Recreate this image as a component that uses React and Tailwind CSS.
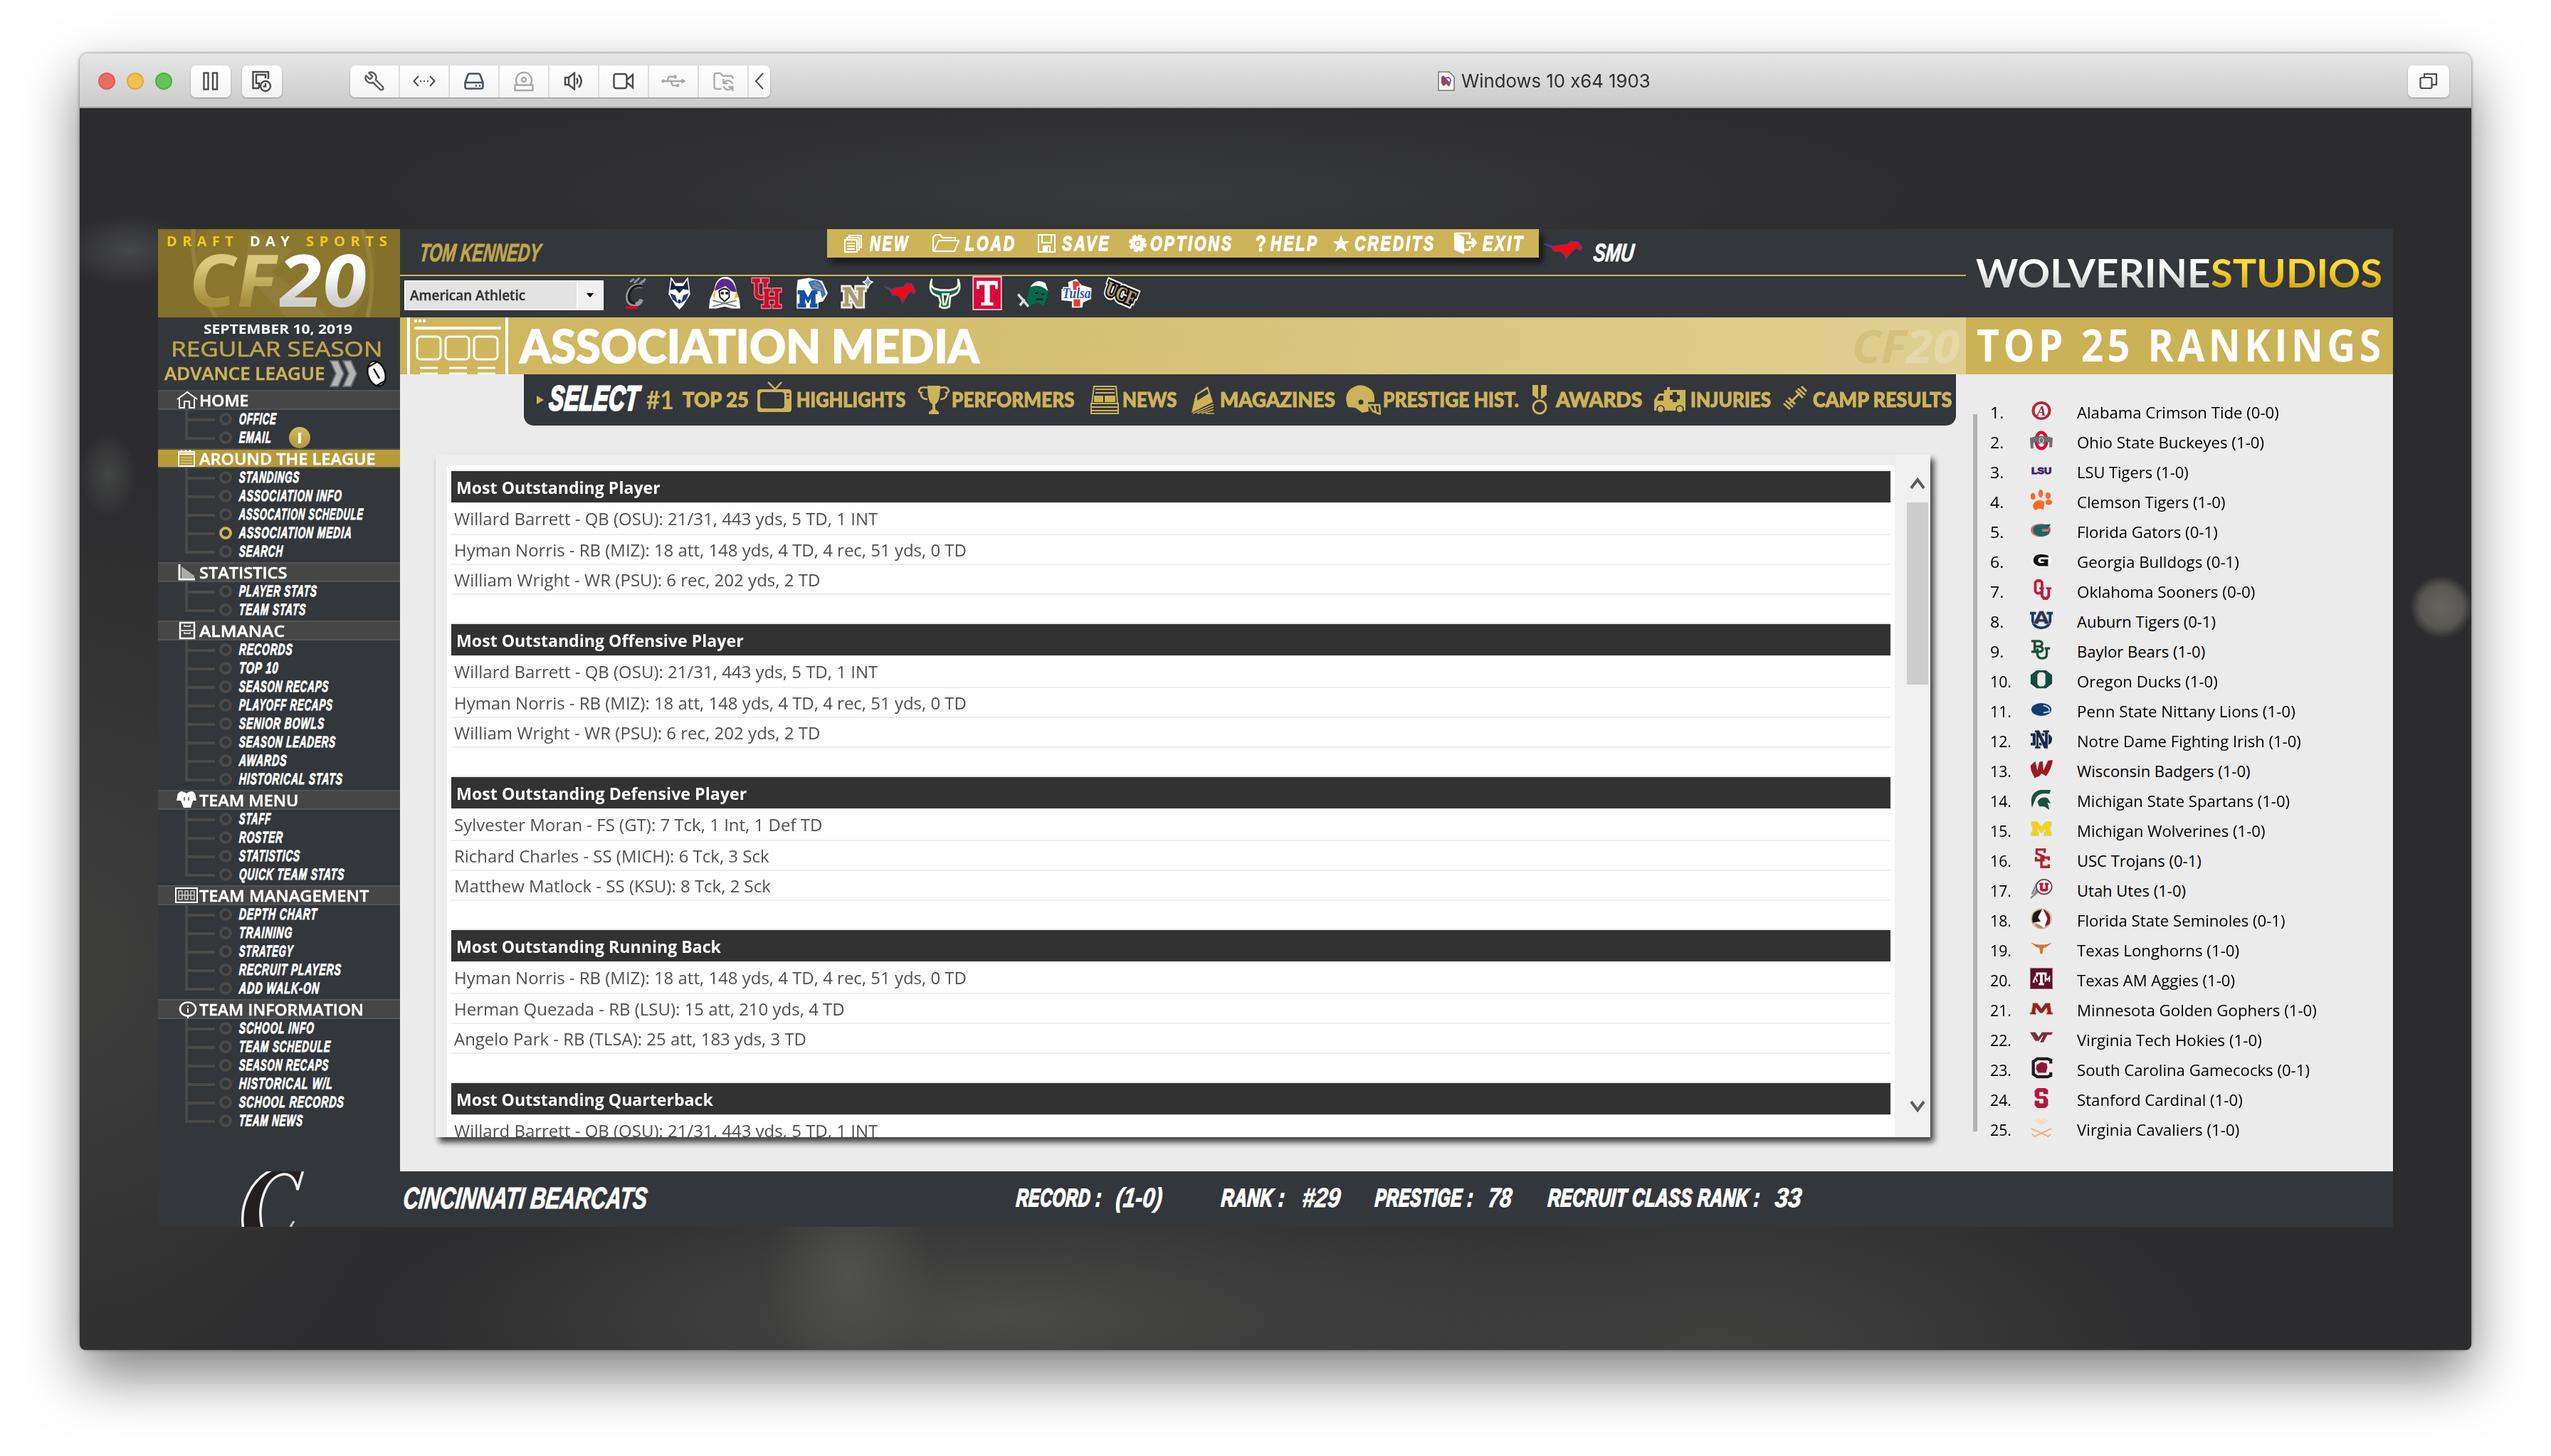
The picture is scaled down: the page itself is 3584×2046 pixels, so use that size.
import React, { useLayoutEffect, useRef, useState } from "react";
import { Wrench, Usb, FolderSync } from "lucide-react";

/* Text squeezed or stretched horizontally to a given width. */
function Fit({ w, className = "", inner = "", skew = 0, children }) {
  const ref = useRef(null);
  const [s, setS] = useState(1);
  useLayoutEffect(() => {
    if (ref.current) setS(w / ref.current.offsetWidth);
  }, [w]);
  return (
    <span className={"block shrink-0 leading-none " + className} style={{ width: w }}>
      <span
        ref={ref}
        className={"block w-max origin-left whitespace-nowrap " + inner}
        style={{ transform: `skewX(${skew}deg) scaleX(${s})` }}
      >
        {children}
      </span>
    </span>
  );
}

const GOTHIC = "font-['Liberation_Sans',sans-serif] font-bold italic ";
const OPEN = "font-['Open_Sans','Noto_Sans',sans-serif] ";
const LATO = "font-['Lato',sans-serif] font-black ";

/* ---------- title bar ---------- */
function ToolCell({ children, last }) {
  return (
    <div className={"flex h-full items-center justify-center " + (last ? "w-[30px]" : "w-[70px] border-r-2 border-[#dcdcdc]")}>
      {children}
    </div>
  );
}

function TitleBar() {
  const st = { fill: "none", stroke: "#4a4a4a", strokeWidth: 2.4 };
  return (
    <div className="flex h-[77px] items-center rounded-t-[12px] border-b-2 border-[#a3a3a1] bg-linear-to-b from-[#e6e6e6] to-[#cbcbcb] pl-[26px] pt-[3px]">
      <div className="flex gap-4">
        <div className="size-6 rounded-full border-2 border-[#dc5d54] bg-[#ee6b60]" />
        <div className="size-6 rounded-full border-2 border-[#e0a73e] bg-[#f5be4f]" />
        <div className="size-6 rounded-full border-2 border-[#52ad44] bg-[#61c654]" />
      </div>
      <div className="ml-[26px] flex h-[45px] w-[56px] items-center justify-center rounded-[7px] bg-linear-to-b from-white to-[#f3f3f3] shadow-[0_1px_2px_#888]">
        <svg width="22" height="26" {...st}><rect x="1.5" y="1.5" width="6" height="23" /><rect x="14" y="1.5" width="6" height="23" /></svg>
      </div>
      <div className="ml-4 flex h-[45px] w-[56px] items-center justify-center rounded-[7px] bg-linear-to-b from-white to-[#f3f3f3] shadow-[0_1px_2px_#888]">
        <svg width="28" height="32" {...st}><path d="M10 26H1.5V3H23V13M10 26V19H6V7H19V12" /><circle cx="19" cy="23" r="7" /><path d="M19 19V23.5H15.5" /></svg>
      </div>
      <div className="ml-[96px] flex h-[45px] w-[590px] rounded-[7px] bg-linear-to-b from-white to-[#f3f3f3] shadow-[0_1px_2px_#888]">
        <ToolCell><Wrench size={30} color="#5a5a5a" strokeWidth={1.9} className="-scale-x-100" /></ToolCell>
        <ToolCell><svg width="32" height="18" {...st} strokeWidth="2"><path d="M8 2L1.5 9L8 16M24 2L30.5 9L24 16M10 9h2M15 9h2M20 9h2" /></svg></ToolCell>
        <ToolCell><svg width="28" height="24" fill="none" stroke="#45506e" strokeWidth="2.6"><path d="M1.5 14L5.500 3Q6 1.500 8 1.500H20Q22 1.500 22.500 3L26.500 14V20Q26.500 22.500 24 22.500H4Q1.500 22.500 1.500 20ZM1.500 14H26.500M16 18.500h2M21 18.500h2" /></svg></ToolCell>
        <ToolCell><svg width="28" height="30" fill="none" stroke="#a9a9a9" strokeWidth="2.4"><path d="M5 20A11 11 0 1 1 23 20M1.500 20.500H26.500V28H1.500Z" /><circle cx="14" cy="13" r="3" /></svg></ToolCell>
        <ToolCell><svg width="28" height="26" {...st}><path d="M2 8H7L15 1.500V24.500L7 18H2ZM7 8V18M18 9Q21 13 18 17M21 4Q28.500 13 21 22" /></svg></ToolCell>
        <ToolCell><svg width="30" height="24" {...st}><rect x="1.500" y="2" width="18" height="20" rx="3" /><path d="M20 10L28 3V21L20 14" /></svg></ToolCell>
        <ToolCell><Usb size={30} color="#a9a9a9" strokeWidth={1.9} className="rotate-45" /></ToolCell>
        <ToolCell><FolderSync size={31} color="#a9a9a9" strokeWidth={1.8} /></ToolCell>
        <ToolCell last><svg width="14" height="26" {...st} strokeWidth="2"><path d="M12 2L2 13L12 24" /></svg></ToolCell>
      </div>
      <svg className="ml-[938px]" width="24" height="28"><path d="M1 1H16L23 8V27H1Z" fill="#fff" stroke="#777" strokeWidth="1.5" /><path d="M5 8L8 6L18 17L16 22L12 18L8 21L5 17Z" fill="#b03a4c" /><circle cx="14" cy="13" r="4" fill="none" stroke="#4868a8" strokeWidth="2" /></svg>
      <Fit w={266} className="ml-[9px] font-['Inter',sans-serif] text-[26px] text-[#2e2e2e] [font-feature-settings:'calt'_0]">Windows 10 x64 1903</Fit>
      <div className="ml-[1064px] flex h-[45px] w-[58px] items-center justify-center rounded-[7px] bg-linear-to-b from-white to-[#f3f3f3] shadow-[0_1px_2px_#888]">
        <svg width="26" height="24" {...st} strokeWidth="2.2"><rect x="1.500" y="7" width="16" height="15" rx="2" /><path d="M7 7V2H24V17H18" /></svg>
      </div>
    </div>
  );
}

/* ---------- sidebar ---------- */
const sections = [
  { t: "HOME", w: 69, icon: "home", rows: [["OFFICE", 53], ["EMAIL", 46]] },
  { t: "AROUND THE LEAGUE", w: 248, icon: "cal", on: true, rows: [["STANDINGS", 85], ["ASSOCIATION INFO", 145], ["ASSOCATION SCHEDULE", 175], ["ASSOCIATION MEDIA", 159, true], ["SEARCH", 62]] },
  { t: "STATISTICS", w: 124, icon: "stat", rows: [["PLAYER STATS", 110], ["TEAM STATS", 94]] },
  { t: "ALMANAC", w: 120, icon: "alm", rows: [["RECORDS", 76], ["TOP 10", 56], ["SEASON RECAPS", 126], ["PLAYOFF RECAPS", 132], ["SENIOR BOWLS", 120], ["SEASON LEADERS", 136], ["AWARDS", 68], ["HISTORICAL STATS", 146]] },
  { t: "TEAM MENU", w: 139, icon: "team", rows: [["STAFF", 45], ["ROSTER", 62], ["STATISTICS", 86], ["QUICK TEAM STATS", 148]] },
  { t: "TEAM MANAGEMENT", w: 238, icon: "mgmt", rows: [["DEPTH CHART", 110], ["TRAINING", 75], ["STRATEGY", 76], ["RECRUIT PLAYERS", 144], ["ADD WALK-ON", 113]] },
  { t: "TEAM INFORMATION", w: 231, icon: "info", rows: [["SCHOOL INFO", 106], ["TEAM SCHEDULE", 129], ["SEASON RECAPS", 126], ["HISTORICAL W/L", 132], ["SCHOOL RECORDS", 148], ["TEAM NEWS", 90]] },
];

function SideIcon({ k }) {
  const p = { width: 32, height: 26, viewBox: "0 0 32 26", fill: "none", stroke: "#fff", strokeWidth: 2 };
  if (k === "home") return <svg {...p}><path d="M3 12L17 2L31 12M6 11V24H13V15H20V24H27V11" /></svg>;
  if (k === "cal") return <svg {...p}><path d="M5 4H27V24H5ZM5 7H27M9 1V5M15 1V5M21 1V5" /><path d="M8 12H24M8 16H24M8 20H24" strokeOpacity=".3" /></svg>;
  if (k === "stat") return <svg {...p}><path d="M6 2V23H28" strokeWidth="3" /><path d="M9 22V5L27 18V22Z" fill="#aaa" stroke="none" /></svg>;
  if (k === "alm") return <svg {...p}><path d="M7 2H27V24H7Z" strokeWidth="2.5" /><path d="M7 13H27M13 5V7H21V5M13 15V17H21V15" stroke="#ccc" /></svg>;
  if (k === "team") return <svg {...p}><path d="M3 9Q3 2 9 1Q14 2 16 4Q19 1 24 1Q29 3 29 9L30 14H25L22 24H12L8 14H2Z" fill="#fff" stroke="none" /><path d="M13 9V14M19 9V14" stroke="#777" /></svg>;
  if (k === "mgmt") return <svg {...p}><path d="M1 3H31V23H1Z" /><path d="M5 7H10V19H5ZM14 7H18V19H14ZM22 7H27V19H22ZM5 13H27" stroke="#ccc" strokeWidth="1.5" /></svg>;
  return <svg {...p}><ellipse cx="18" cy="13" rx="11" ry="9.500" strokeWidth="2.5" /><path d="M18 22V26M18 8V10M18 12V18" /></svg>;
}

function Sidebar() {
  return (
    <div className="flex w-[340px] shrink-0 flex-col bg-[#33363b]">
      <div className="relative h-[124px] overflow-hidden bg-[#84702a]">
        <svg className="absolute inset-0" width="340" height="124"><path d="M70 0Q30 60 80 124H270Q330 60 290 0Z" fill="#8d7930" fillOpacity=".6" /><path d="M50 0Q44 70 82 124M286 0Q310 60 294 124" stroke="#95813a" strokeWidth="6" fill="none" /><path d="M130 0L190 30L160 60L200 90L240 124H180L120 60Z" fill="#968345" fillOpacity=".5" /></svg>
        <div className="relative pl-[12px] pt-[8px]">
          <div className="flex justify-between pr-[10px]">
            <Fit w={101} className="font-['Open_Sans',sans-serif] text-[19px] font-bold tracking-[7px] text-[#f3c81c]">DRAFT</Fit>
            <Fit w={63} className="font-['Open_Sans',sans-serif] text-[19px] font-bold tracking-[7px] text-white">DAY</Fit>
            <Fit w={122} className="font-['Open_Sans',sans-serif] text-[19px] font-bold tracking-[7px] text-[#f3c81c]">SPORTS</Fit>
          </div>
          <div className="mt-[-8px] flex pl-[31px]">
            <Fit w={130} skew={3} className="h-[102px] font-['Open_Sans',sans-serif] text-[102px] font-bold italic" inner="pr-[6px] bg-linear-to-b from-[#dcc87c] from-30% to-[#a8903e] to-80% bg-clip-text text-transparent">CF</Fit>
            <Fit w={128} skew={3} className="ml-[-4px] h-[102px] font-['Open_Sans',sans-serif] text-[102px] font-bold italic" inner="pr-[4px] bg-linear-to-b from-white from-40% to-[#cfcfcf] to-80% bg-clip-text text-transparent">20</Fit>
          </div>
        </div>
      </div>
      <div className="flex h-[102px] flex-col">
        <Fit w={209} className={OPEN + "ml-[64px] mt-[7px] text-[18px] font-bold text-white"}>SEPTEMBER 10, 2019</Fit>
        <Fit w={297} className={OPEN + "ml-[18px] mt-[4px] text-[30px] font-medium text-[#bfa64a] [-webkit-text-stroke:0.6px_#bfa64a]"}>REGULAR SEASON</Fit>
        <div className="flex h-[40px] items-center pl-[9px]">
          <Fit w={226} className={OPEN + "mt-[-1px] text-[25px] font-semibold text-[#cdb358] [-webkit-text-stroke:0.5px_#cdb358]"}>ADVANCE LEAGUE</Fit>
          <svg className="ml-[6px]" width="40" height="38"><path d="M1 1H12L20 19L12 37H1L9 19ZM19 1H30L38 19L30 37H19L27 19Z" fill="#b5b5b5" stroke="#6e7073" strokeWidth="2" /></svg>
          <svg className="ml-[10px]" width="32" height="40" viewBox="0 0 32 40"><ellipse cx="16" cy="20" rx="12" ry="18" transform="rotate(-18 16 20)" fill="#fff" stroke="#111" strokeWidth="2.5" /><path d="M4 11L16 4M16 37L28 30M12 13L20 27" stroke="#111" strokeWidth="2.5" /></svg>
        </div>
      </div>
      {sections.map((s) => (
        <div key={s.t} className="mb-[2px]">
          <div className={"flex h-[28px] items-center border-y-2 pl-[24px] " + (s.on ? "border-[#4f4d48] bg-[#b79b38]" : "border-[#535353] bg-[#464646]")}>
            <SideIcon k={s.icon} />
            <Fit w={s.w} className={OPEN + "ml-[2px] text-[22px] font-semibold text-white [-webkit-text-stroke:0.5px_white]"}>{s.t}</Fit>
          </div>
          {s.rows.map(([t, w, on], i) => (
            <div key={t} className="flex h-[26px] items-center pl-[38px]">
              <div className="flex h-full w-[4px] flex-col">
                <div className={i === s.rows.length - 1 ? "h-[16px] w-[4px] bg-[#4b4a49]" : "h-full w-[4px] bg-[#4b4a49]"} />
              </div>
              <div className="mt-[2px] h-[4px] w-[38px] bg-[#4b4a49]" />
              <div className={"ml-[6px] size-[18px] rounded-full border-4 " + (on ? "border-[#cdb358]" : "border-[#4b4a49]")} />
              <Fit w={w} skew={-4} className={GOTHIC + "ml-[10px] text-[22px] tracking-[1.5px] text-white [-webkit-text-stroke:1px_white]"}>{t}</Fit>
              {t === "EMAIL" && (
                <div className="ml-[24px] flex h-[30px] w-[30px] items-center justify-center rounded-full bg-linear-to-b from-[#d2ba62] to-[#b0963c]">
                  <div className="h-[15px] w-[4px] bg-white" />
                </div>
              )}
            </div>
          ))}
        </div>
      ))}
      <div className="mt-auto h-[78px] overflow-hidden">
        <svg width="340" height="78"><path d="M160 -2C130 12 114 48 120 82H147C138 50 150 8 176 4Q192 3 196 26L204 -2Z" fill="#231f20" stroke="#f4f4f4" strokeWidth="3.5" /><path d="M186 78L191 70" stroke="#ccc" strokeWidth="3" /></svg>
      </div>
    </div>
  );
}

/* ---------- team marks ---------- */
function Mark({ k, w = 34, h = 32 }) {
  const T = ({ c, x = 17, y = 26, s = 28, st = "#fff", sw = 2, f = "Liberation Serif", tl, i, children }) => (
    <text x={x} y={y} textAnchor="middle" fontFamily={f + ", serif"} fontWeight="bold" fontStyle={i ? "italic" : "normal"} fontSize={s} fill={c} stroke={st} strokeWidth={sw} paintOrder="stroke" textLength={tl} lengthAdjust="spacingAndGlyphs">{children}</text>
  );
  const marks = {
    cin: <><path d="M25 9Q14 7 11 18Q10 27 18 27Q22 27 24 22" fill="none" stroke="#999" strokeWidth="4" /><path d="M25 9Q15 7 12 18Q11.500 26 18 26" fill="none" stroke="#1a1a1a" strokeWidth="2.500" /><path d="M13 5L17 2M17 6L22 1M22 7L28 2M24 4L27 5" stroke="#8f9193" strokeWidth="2" /><path d="M9 30H20" stroke="#e4002b" strokeWidth="3" /></>,
    con: <><path d="M6 0L12 6H22L28 0L31 17L22 28L17 32L12 28L3 17Z" fill="#fff" /><path d="M7 3L12 9H22L27 3L29 13L22 12L17 16L12 12L5 13Z" fill="#14264a" /><path d="M5 16L12 18L15 26L8 22ZM29 16L22 18L19 26L26 22Z" fill="#2b3f73" /><circle cx="17" cy="24" r="2" fill="#14264a" /></>,
    ecu: <><path d="M6 12Q8 0 18 0Q28 0 30 14L33 22L34 31H25L17 29L8 31H0L1 22Z" fill="#fff" /><path d="M6 14Q9 1 18 2Q27 2 30 15L24 14L18 9L11 12Z" fill="#592a8a" /><path d="M4 18L8 12L6 22ZM30 14L27 22L32 20Z" fill="#e8c52f" /><path d="M11 14Q17 9 22 14V20L17 24L12 20Z" fill="#fff" stroke="#222" strokeWidth="1.500" /><path d="M13 16h3M18 16h3" stroke="#111" strokeWidth="2.500" /><path d="M4 29L30 23M4 23L30 29" stroke="#777" strokeWidth="1.200" /></>,
    uh: <g fill="#c8102e" stroke="#e58a98" strokeWidth="1"><path d="M0 1H10V6H8V17Q12 19 13 17V6H11V1H20V6H18V18Q14 24 8 22Q3 21 3 16V6H0Z" /><path d="M13 11H22V15H20V19H26V15H24V11H34V15H31V27H34V31H24V27H26V23H20V27H22V31H11V27H14V15H13Z" /></g>,
    mem: <><path d="M2 3L14 1L28 4L34 16L29 24L24 25V31H1V12Z" fill="#fff" /><path d="M2 13H9L13 20L17 13H23V17H21V26H23V30H15V26H16V21L13 26L10 21V26H11V30H2V26H4V17H2Z" fill="#1450a0" /><path d="M13 5Q24 0 29 9L32 17L28 21L26 14L22 14L17 12Z" fill="#3f74b5" /><path d="M18 9L28 13M20 5Q24 9 26 8" stroke="#8a8d8f" strokeWidth="2" fill="none" /></>,
    nav: <><path d="M2 9H11L18 20V14H16V9H27V14H25V30H17L10 19V25H12V30H2V25H4V14H2Z" fill="#a99b70" stroke="#f1eee4" strokeWidth="2" /><path d="M29 0L31 4L34 5L31 7L29 11L27 7L24 5L27 4Z" fill="#8f9fce" stroke="#fff" /></>,
    smu: <path d="M0 9L8 12Q14 10 20 10L23 6L29 7L33 14L31 17L28 14L24 18L19 26L17 21L14 18L9 18L6 13Z" fill="#f00a12" stroke="#354ca1" strokeWidth="0.800" />,
    usf: <path d="M4 2Q1 10 8 12L13 13H22L27 12Q33 10 31 2Q36 15 26 18L23 19L22 29Q17 32 12 29L13 25L11 19L8 18Q-1 15 4 2ZM15 17L16 27H18L21 17Z" fill="#0b6b4f" stroke="#f5f2dd" strokeWidth="2" />,
    tem: <><path d="M1 0H33V32H1Z" fill="#d9083a" stroke="#f5b9c6" strokeWidth="1.500" /><path d="M5 4H29V12H26V8H20V25H24V28H10V25H14V8H8V12H5Z" fill="#fff" /></>,
    tul: <><path d="M12 16Q12 6 23 6Q34 8 32 20L28 28L22 25L14 28L10 22Z" fill="#056a4a" /><path d="M14 10Q20 1 30 6L33 14Q24 6 14 10Z" fill="#fff" /><path d="M1 17L12 29M3 28L8 22" stroke="#ddd" strokeWidth="2.500" /><path d="M19 16h3M26 17h3M20 22h7" stroke="#012" strokeWidth="1.500" /></>,
    tls: <><path d="M8 5L17 2L22 8L33 11L31 22L24 25L23 30H12V24L1 23V12H9Z" fill="#fff" /><path d="M13 4L20 5L21 29H14Z" fill="#e0402c" /><T c="#1f5aa6" y="21" s="14" i tl="30" sw="2">Tulsa</T></>,
    ucf: <g transform="rotate(22 17 16)"><T c="#b9a273" y="23" s="20" tl="32" st="#fff" sw="7">UCF</T><T c="#b9a273" y="23" s="20" tl="32" st="#111" sw="4">UCF</T></g>,
    ala: <><ellipse cx="17" cy="16" rx="15" ry="14.500" fill="#b3283f" stroke="#fff" /><ellipse cx="17" cy="16" rx="10" ry="10" fill="#fff" /><T c="#a51c36" y="23" s="20" i sw="0">A</T></>,
    osu: <><ellipse cx="17" cy="16" rx="8" ry="12" fill="none" stroke="#d0103a" strokeWidth="5" /><path d="M0 12Q17 6 34 12L33 26H29V19Q23 15 22 22L17 20L12 22Q9 15 5 20V28H1Z" fill="#6b6e70" /><ellipse cx="17" cy="16" rx="3" ry="4" fill="none" stroke="#ccc" strokeWidth="1.200" /></>,
    lsu: <T c="#3c2370" y="21" s="13" tl="30" f="Liberation Sans" st="#3c2370" sw="1">LSU</T>,
    cle: <g fill="#f76c2b"><path d="M6 20Q14 12 22 19L20 30Q14 27 8 31Q2 26 6 20Z" /><ellipse cx="4.500" cy="10" rx="3.500" ry="5" /><ellipse cx="16" cy="6" rx="3.500" ry="6" /><ellipse cx="27" cy="9" rx="4" ry="5" /><ellipse cx="28" cy="19" rx="5" ry="4" /></g>,
    fla: <><ellipse cx="16" cy="16" rx="15" ry="10" fill="#d56a6f" /><path d="M31 7L27 14H18V18H27L30 12L28 22Q14 30 5 19Q3 8 16 8Z" fill="#146a60" /></>,
    uga: <><ellipse cx="17" cy="16" rx="15" ry="11" fill="#fff" /><path d="M27 9Q12 4 6 12Q2 22 14 25H27V15H16V18H21V20Q12 22 12 16Q13 11 22 12H28Z" fill="#111" /></>,
    okl: <g fill="#c21b3c" fillRule="evenodd"><path d="M6 4L10 0H16L20 4V19L16 23H10L6 19ZM10 5V18L12 19L16 18V5L13 4Z" /><path d="M14 12H21V15H20V25L24 27L26 24V15H24V12H32V15H30V26L26 31H20L16 26V15H14Z" /></g>,
    aub: <><path d="M4 6V18Q6 28 17 28Q28 28 30 18V6M0 6H9M25 6H34" stroke="#1b3768" strokeWidth="4" fill="none" /><path d="M14 3H20L29 22H22L21 19H13L12 22H5ZM17 8L14 15H20Z" fill="#1b3768" fillRule="evenodd" stroke="#d08258" strokeWidth="0.800" /></>,
    bay: <g fill="none" stroke="#1c5038" strokeWidth="3.500"><path d="M2 3H14Q19 4 18 8Q17 11 13 11Q20 12 19 16Q18 19 14 19H2M7 3V19M7 11H13" /><path d="M11 14V23Q12 29 18 29Q25 29 25 23V14M22 14H30" /></g>,
    ore: <path d="M10 2H24L33 9V22L24 29H10L1 22V9ZM14 5L11 8V23L14 26H20L23 23V8L20 5Z" fill="#154b41" fillRule="evenodd" />,
    psu: <><ellipse cx="17" cy="16" rx="16" ry="11" fill="#dfe5ee" /><ellipse cx="17" cy="16" rx="15" ry="9.500" fill="#123a75" /><path d="M20 10Q30 12 29 18M20 21L30 19" stroke="#d6e0ef" strokeWidth="1.800" fill="none" /></>,
    nd: <g fill="#17294d"><path d="M1 7H22Q33 8 33 16Q33 25 22 25H1V21H4V11H1ZM9 11V21H22Q28 21 28 16Q28 11 22 11Z" fillRule="evenodd" /><path d="M7 2H14L22 19V6H19V2H29V6H27V30H21L13 13V26H16V30H7V26H9V6H7Z" stroke="#ebebeb" strokeWidth="1" /></g>,
    wis: <path d="M1 10L8 4L11 18L14 5L19 4L20 18L27 3L34 2Q32 16 24 26L17 22L14 26L7 29L4 23Q1 18 1 10Z" fill="#9d1a20" />,
    msu: <><path d="M3 29Q-2 5 16 2H31L29 8Q12 5 8 16Z" fill="#1d4f41" /><path d="M11 20Q16 11 26 14L31 22L26 21L29 32L21 27H14Z" fill="#1d4f41" /></>,
    mic: <path d="M2 5H11L17 13L23 5H32V11H30V20H32V26H21V20H23V15L17 22L11 15V20H13V26H2V20H4V11H2Z" fill="#f7d117" stroke="#cfc9a0" strokeWidth="0.800" />,
    usc: <g fill="none" stroke="#b01e2e" strokeWidth="3.500"><path d="M22 7V2H10V8L20 12V18H9V13" /><path d="M28 18V14H17V28H28V24" /></g>,
    uta: <><path d="M1 30L14 18M3 24L10 8M6 24L12 14" stroke="#888" strokeWidth="2.500" /><ellipse cx="21" cy="13" rx="11.500" ry="11" fill="#fff" stroke="#555" strokeWidth="2" /><path d="M14 7H20V10H19V16H23V10H22V7H28V10H27V18L24 20H18L15 18V10H14Z" fill="#d0103a" /></>,
    fsu: <><circle cx="17" cy="16" r="14.500" fill="#fff" stroke="#d1b486" strokeWidth="2" /><path d="M4 22Q0 4 18 2L12 14L16 20Z" fill="#1d1a1b" /><path d="M20 2Q34 8 29 24L22 28L26 16Z" fill="#7c2133" /><path d="M6 22Q16 24 20 30Q10 32 6 22Z" fill="#b98b60" /></>,
    tex: <path d="M1 7Q10 11 17 10Q24 11 33 7L24 14L20 15L18.500 24H15.500L14 15L10 14Z" fill="#d5713a" />,
    tam: <><path d="M0 0H34V32H0Z" fill="#5c0f2b" /><path d="M0.500 0.500H33.500V31.500H0.500Z" fill="none" stroke="#a67484" /><path d="M9 7H25V13H22V10H19V23H21V26H13V23H15V10H12V13H9Z" fill="#fff" /><path d="M5 21L8 14L11 21M4 21H7M23 21V14L26 18L29 14V21" fill="none" stroke="#fff" strokeWidth="2" /></>,
    min: <path d="M4 8H11L17 16L23 8H30L32 22H34V25H25V22H26L25 15L19 23H15L9 15L8 22H9V25H0V22H2L4 11Z" fill="#8c2331" stroke="#e6a25b" strokeWidth="1" />,
    vt: <path d="M0 7H8L13 14L18 7H34L32 11H26L20 22H15L20 12H19L13 20L8 20Z" fill="#7b2c43" />,
    sc: <><path d="M31 9V4L26 2H11L5 6V25L11 29H26L31 27V22" fill="none" stroke="#201c1d" strokeWidth="4.500" /><path d="M10 11L17 7L25 9L26 15L24 23H12L9 17Z" fill="#8f1735" /></>,
    sta: <path d="M27 10V4L23 1H11L7 5V13L11 17H20V24H14V20H7V27L11 31H23L27 27V18L23 13H14V7H20V10Z" fill="#b1173a" />,
    uva: <><path d="M7 4L17 11L27 4M12 2L17 8L22 2" fill="none" stroke="#f9d8c2" strokeWidth="2.500" /><path d="M2 17L28 29M32 17L6 29M3 25L8 30M31 25L26 30" stroke="#f5ad7a" strokeWidth="2" /></>,
  };
  return <svg className="block shrink-0 overflow-visible" width={w} height={h} viewBox="0 0 34 32" preserveAspectRatio="none">{marks[k]}</svg>;
}

/* ---------- header ---------- */
const MENU = GOTHIC + "text-[30px] tracking-[4px] text-white [-webkit-text-stroke:1.4px_white]";

function MenuBar() {
  const p = { fill: "none", stroke: "#fff", strokeWidth: 2 };
  return (
    <div className="flex h-[40px] w-[1000px] items-center bg-[#cdb358] shadow-[6px_8px_8px_#17191b]">
      <svg className="ml-[24px] shrink-0" width="26" height="26" {...p}><path d="M1 8H18V25H1ZM4 8V5H21V22H18M7 5V2H24V19H21M4 13H15M4 17H15M4 21H15" /></svg>
      <Fit w={56} className={MENU + " ml-[10px]"}>NEW</Fit>
      <svg className="ml-[32px] shrink-0" width="39" height="26" {...p}><path d="M1 24V4L5 1H11L14 5H32V9M2 24L9 9H37L31 24Z" /></svg>
      <Fit w={72} className={MENU + " ml-[7px]"}>LOAD</Fit>
      <svg className="ml-[30px] shrink-0" width="25" height="26" {...p}><path d="M1 1H24V25H1ZM6 1V12H19V1M8 25V17H17V25" /><path d="M9 18H13V25H9Z" fill="#fff" /></svg>
      <Fit w={68} className={MENU + " ml-[9px]"}>SAVE</Fit>
      <svg className="ml-[26px] shrink-0" width="25" height="26"><circle cx="12.500" cy="13" r="10" fill="#fff" /><circle cx="12.500" cy="13" r="10.500" fill="none" stroke="#fff" strokeWidth="4" strokeDasharray="5.500 2.740" /><circle cx="12.500" cy="13" r="3" fill="none" stroke="#cdb358" strokeWidth="1.500" /></svg>
      <Fit w={117} className={MENU + " ml-[5px]"}>OPTIONS</Fit>
      <Fit w={15} className="ml-[31px] font-['Liberation_Sans',sans-serif] text-[31px] font-bold text-white [-webkit-text-stroke:1px_white]">?</Fit>
      <Fit w={68} className={MENU + " ml-[6px]"}>HELP</Fit>
      <svg className="ml-[19px] shrink-0" width="24" height="26"><path d="M12 1L15 10H24L17 15L20 25L12 19L4 25L7 15L0 10H9Z" fill="#fff" /></svg>
      <Fit w={114} className={MENU + " ml-[7px]"}>CREDITS</Fit>
      <svg className="ml-[26px] shrink-0" width="32" height="32"><path d="M1 2H22V10M22 20V25H14" fill="none" stroke="#fff" strokeWidth="2.500" /><path d="M0 1L14 7V31L0 25Z" fill="#fff" /><path d="M17 15H30M25 9L30 15L25 21" fill="none" stroke="#fff" strokeWidth="4" /></svg>
      <Fit w={59} className={MENU + " ml-[8px]"}>EXIT</Fit>
    </div>
  );
}

const conf = [["cin", 50, 0], ["con", 37, 20], ["ecu", 44, 23], ["uh", 42, 16], ["mem", 45, 20], ["nav", 46, 17], ["smu", 46, 16], ["usf", 46, 16], ["tem", 42, 16], ["tul", 45, 21], ["tls", 45, 16], ["ucf", 46, 17]];

function Header() {
  return (
    <div className="flex h-[124px] bg-[#33363b]">
      <div className="w-[2200px]">
        <div className="flex h-[66px] border-b-2 border-[#cdb358] pl-[28px]">
          <Fit w={170} skew={-6} className={GOTHIC + "mt-[15px] text-[35px] text-[#bfa64a] [-webkit-text-stroke:0.9px_#bfa64a]"}>TOM KENNEDY</Fit>
          <div className="ml-[402px]"><MenuBar /></div>
          <div className="ml-[7px] mt-[9px]"><Mark k="smu" w={56} h={40} /></div>
          <Fit w={57} skew={-6} className={GOTHIC + "ml-[14px] mt-[15px] text-[35px] text-white [-webkit-text-stroke:0.9px_white]"}>SMU</Fit>
        </div>
        <div className="flex h-[58px] pl-[6px]">
          <div className="mt-[6px] flex h-[42px] w-[280px] items-center border-2 border-white bg-[#e3e3e3] pl-[6px]">
            <Fit w={162} className={OPEN + "text-[19px] font-semibold text-[#333] [-webkit-text-stroke:0.4px_#333]"}>American Athletic</Fit>
            <div className="ml-auto flex h-full w-[36px] items-center justify-center border-l-2 border-white bg-[#f0f0f0]">
              <svg width="10" height="6"><path d="M0 0H10L5 6Z" fill="#000" /></svg>
            </div>
          </div>
          <div className="ml-[18px] mt-[1px] flex">
            {conf.map(([k, w, g]) => (
              <div key={k} style={{ marginLeft: g }}><Mark k={k} w={w} h={46} /></div>
            ))}
          </div>
        </div>
      </div>
      <div className="flex w-[600px] pl-[14px] pt-[33px]">
        <Fit w={330} className="font-['Lato',sans-serif] text-[56px] font-bold" inner="bg-linear-to-b from-white from-35% to-[#cfcfcf] to-85% bg-clip-text text-transparent">WOLVERINE</Fit>
        <Fit w={241} className="font-['Lato',sans-serif] text-[56px] font-bold" inner="bg-linear-to-b from-[#fdd835] from-35% to-[#d6ab0c] to-85% bg-clip-text text-transparent">STUDIOS</Fit>
      </div>
    </div>
  );
}

function Banner() {
  return (
    <div className="flex h-[80px]">
      <div className="flex w-[2200px] items-center bg-linear-to-r from-[#ceb55b] to-[#dfcf92] pl-[10px]">
        <svg width="142" height="80" fill="none" stroke="#fff" strokeWidth="3">
          <path d="M2 0V80M140 0V80" strokeWidth="4" />
          <path d="M10 15H132" strokeWidth="4" />
          <path d="M10 5h4M16 5h4M22 5h4" strokeWidth="4" />
          <rect x="14" y="27" width="33" height="32" rx="5" /><rect x="54" y="27" width="33" height="32" rx="5" /><rect x="94" y="27" width="33" height="32" rx="5" />
          <path d="M18 71H43M59 71H84M99 71H124M18 79H43M59 79H84M99 79H124" />
        </svg>
        <Fit w={646} className={LATO + "ml-[16px] mt-[-2px] text-[65px] text-white [-webkit-text-stroke:1.5px_white]"}>ASSOCIATION MEDIA</Fit>
        <div className="ml-[1226px] flex">
          <Fit w={76} className="font-['Open_Sans',sans-serif] text-[64px] font-bold italic text-[#d5c07c]">CF</Fit>
          <Fit w={76} className="font-['Open_Sans',sans-serif] text-[64px] font-bold italic text-[#e5d8a8]">20</Fit>
        </div>
      </div>
      <div className="flex w-[600px] items-center bg-[#cbb256] pl-[15px]">
        <Fit w={574} className="mt-[-4px] font-['Open_Sans',sans-serif] text-[62px] font-bold tracking-[6px] text-white">TOP 25 RANKINGS</Fit>
      </div>
    </div>
  );
}

const NAV = LATO + "mt-[-2px] text-[28px] text-[#cdb358] [-webkit-text-stroke:1px_#cdb358] ";
const G = "#cdb358";

function NavBar() {
  return (
    <div className="ml-[174px] flex h-[72px] w-[2012px] items-center rounded-b-[14px] bg-[#33363b]">
      <svg className="ml-[18px] shrink-0" width="10" height="12"><path d="M0 0L10 6L0 12Z" fill={G} /></svg>
      <Fit w={126} skew={-5} className={GOTHIC + "ml-[8px] mt-[-4px] text-[48px] tracking-[1px] text-white [-webkit-text-stroke:3px_white]"}>SELECT</Fit>
      <Fit w={39} className="ml-[10px] mt-[-3px] font-['Lato',sans-serif] text-[37px] font-bold text-[#cdb358]">#1</Fit>
      <Fit w={93} className={NAV + "ml-[12px]"}>TOP 25</Fit>
      <svg className="mb-[8px] ml-[12px] shrink-0" width="48" height="44"><path d="M15 1L25 11L34 1" fill="none" stroke={G} strokeWidth="2.500" /><path d="M4 11H44Q48 11 48 15V39Q48 43 44 43H4Q0 43 0 39V15Q0 11 4 11ZM8 15Q4 15 4 19V34Q4 38 8 38H34Q38 38 38 34V19Q38 15 34 15Z" fill={G} fillRule="evenodd" /><path d="M41 18h4M41 23h4" stroke="#33363b" strokeWidth="2.500" /></svg>
      <Fit w={153} className={NAV + "ml-[7px]"}>HIGHLIGHTS</Fit>
      <svg className="ml-[17px] shrink-0" width="46" height="42"><path d="M14 1H32Q32 24 25 27V34L30 38V41H16V38L21 34V27Q14 24 14 1Z" fill={G} /><path d="M14 4Q3 1 2 9Q4 12 7 10M14 20Q4 20 5 10M32 4Q43 1 44 9Q42 12 39 10M32 20Q42 20 41 10" fill="none" stroke={G} strokeWidth="2.500" /></svg>
      <Fit w={173} className={NAV + "ml-[2px]"}>PERFORMERS</Fit>
      <svg className="ml-[22px] shrink-0" width="40" height="40" fill="none" stroke={G} strokeWidth="2"><path d="M5 1H36L38 25H2ZM1 25H39V39H1ZM1 30H39M1 35H39M7 5H34M7 10H34" /><path d="M6 15H17V22H6ZM21 15H34V22H21Z" fill={G} /></svg>
      <Fit w={77} className={NAV + "ml-[5px]"}>NEWS</Fit>
      <svg className="ml-[20px] shrink-0" width="32" height="40"><path d="M6 12L23 1L30 23L0 38Z" fill={G} /><path d="M8 13L22 5L24 11L8 21Z" fill="#33363b" /><path d="M2 39L31 26M8 39L31 30M14 39L31 34M20 39H32" stroke={G} strokeWidth="1.500" /></svg>
      <Fit w={162} className={NAV + "ml-[8px]"}>MAGAZINES</Fit>
      <svg className="ml-[15px] shrink-0" width="49" height="42"><path d="M3 31Q-3 18 4 8Q20 -7 36 7Q41 13 40 24H31L32 37L23 39L13 32Z" fill={G} /><circle cx="21" cy="24" r="3.500" fill="#33363b" /><path d="M32 28H47L48 41L38 37ZM40 28L42 38" fill="none" stroke={G} strokeWidth="2.500" /></svg>
      <Fit w={191} className={NAV + "ml-[3px]"}>PRESTIGE HIST.</Fit>
      <svg className="ml-[18px] shrink-0" width="22" height="42"><path d="M1 0H9V20L1 14ZM13 0H21V14L13 20Z" fill={G} /><circle cx="11" cy="31" r="9" fill="none" stroke={G} strokeWidth="3" /></svg>
      <Fit w={121} className={NAV + "ml-[12px]"}>AWARDS</Fit>
      <svg className="ml-[17px] shrink-0" width="44" height="38"><path d="M14 5H44V34H0V19L6 10H14ZM8 13L4 20H13V13Z" fill={G} fillRule="evenodd" /><path d="M18 1H22V5H18Z" fill={G} /><path d="M29 8V22M22 15H36" stroke="#33363b" strokeWidth="6" /><circle cx="9" cy="32" r="5" fill={G} stroke="#33363b" strokeWidth="1.500" /><circle cx="36" cy="32" r="5" fill={G} stroke="#33363b" strokeWidth="1.500" /></svg>
      <Fit w={113} className={NAV + "ml-[7px]"}>INJURIES</Fit>
      <svg className="mb-[6px] ml-[16px] shrink-0" width="36" height="36" fill="none" stroke={G} strokeWidth="3"><path d="M11 25L25 11M2 26L11 34M5 22L15 31M9 18L18 27M19 8L29 18M22 5L32 14M27 2L34 9" /></svg>
      <Fit w={195} className={NAV + "ml-[7px]"}>CAMP RESULTS</Fit>
    </div>
  );
}

/* ---------- content ---------- */
const WB = ["Willard Barrett - QB (OSU): 21/31, 443 yds, 5 TD, 1 INT", 595];
const HN = ["Hyman Norris - RB (MIZ): 18 att, 148 yds, 4 TD, 4 rec, 51 yds, 0 TD", 720];
const WW = ["William Wright - WR (PSU): 6 rec, 202 yds, 2 TD", 514];
const blocks = [
  ["Most Outstanding Player", 287, [WB, HN, WW]],
  ["Most Outstanding Offensive Player", 404, [WB, HN, WW]],
  ["Most Outstanding Defensive Player", 408, [["Sylvester Moran - FS (GT): 7 Tck, 1 Int, 1 Def TD", 517], ["Richard Charles - SS (MICH): 6 Tck, 3 Sck", 443], ["Matthew Matlock - SS (KSU): 8 Tck, 2 Sck", 445]]],
  ["Most Outstanding Running Back", 372, [HN, ["Herman Quezada - RB (LSU): 15 att, 210 yds, 4 TD", 549], ["Angelo Park - RB (TLSA): 25 att, 183 yds, 3 TD", 495]]],
  ["Most Outstanding Quarterback", 361, [WB]],
];

function Panel() {
  return (
    <div className="ml-[50px] mt-[40px] flex h-[960px] w-[2100px] overflow-hidden bg-[#eeeeee]">
      <div className="ml-[16px] mt-[16px] h-[944px] w-[2034px] overflow-hidden bg-white px-[6px] pt-[6px]">
        {blocks.map(([t, w, rows]) => (
          <div key={t} className="flex h-[215px] flex-col border-t-2 border-[#eeeeee]">
            <div className="flex h-[46px] shrink-0 items-center border-b-2 border-[#eeeeee] bg-[#323232] pl-[7px]">
              <Fit w={w} className={OPEN + "mt-[1px] text-[24px] font-bold text-white"}>{t}</Fit>
            </div>
            {rows.map(([r, rw], i) => (
              <div key={i} className={"flex shrink-0 items-center border-b-2 border-[#eeeeee] pl-[4px] " + (i ? "h-[42px] pt-[1px]" : "h-[44px]")}>
                <Fit w={rw} className={OPEN + "text-[24px] text-[#505050]"}>{r}</Fit>
              </div>
            ))}
          </div>
        ))}
      </div>
      <div className="flex w-[50px] flex-col items-center bg-[#f0f0f0] pl-[14px]">
        <svg className="mt-[32px]" width="22" height="18"><path d="M2 16L11 4L20 16" fill="none" stroke="#5c5c5c" strokeWidth="4" /></svg>
        <div className="mt-[18px] h-[256px] w-[30px] bg-[#cdcdcd]" />
        <svg className="mb-[34px] mt-auto" width="22" height="18"><path d="M2 2L11 14L20 2" fill="none" stroke="#5c5c5c" strokeWidth="4" /></svg>
      </div>
    </div>
  );
}

const ranks = [
  ["ala", "Alabama Crimson Tide (0-0)", 284], ["osu", "Ohio State Buckeyes (1-0)", 263], ["lsu", "LSU Tigers (1-0)", 157],
  ["cle", "Clemson Tigers (1-0)", 208], ["fla", "Florida Gators (0-1)", 198], ["uga", "Georgia Bulldogs (0-1)", 228],
  ["okl", "Oklahoma Sooners (0-0)", 250], ["aub", "Auburn Tigers (0-1)", 195], ["bay", "Baylor Bears (1-0)", 180],
  ["ore", "Oregon Ducks (1-0)", 198], ["psu", "Penn State Nittany Lions (1-0)", 307], ["nd", "Notre Dame Fighting Irish (1-0)", 315],
  ["wis", "Wisconsin Badgers (1-0)", 243], ["msu", "Michigan State Spartans (1-0)", 299], ["mic", "Michigan Wolverines (1-0)", 265],
  ["usc", "USC Trojans (0-1)", 175], ["uta", "Utah Utes (1-0)", 153], ["fsu", "Florida State Seminoles (0-1)", 293],
  ["tex", "Texas Longhorns (1-0)", 228], ["tam", "Texas AM Aggies (1-0)", 222], ["min", "Minnesota Golden Gophers (1-0)", 337],
  ["vt", "Virginia Tech Hokies (1-0)", 260], ["sc", "South Carolina Gamecocks (0-1)", 327], ["sta", "Stanford Cardinal (1-0)", 233], ["uva", "Virginia Cavaliers (1-0)", 228],
];

function Rankings() {
  return (
    <div className="flex w-[600px] pl-[10px]">
      <div className="mt-[56px] h-[1008px] w-[6px] bg-[#b3b3b3]" />
      <div className="ml-[18px] mt-[31px]">
        {ranks.map(([k, t, w], i) => (
          <div key={k} className="flex h-[42px] items-center">
            <Fit w={i < 9 ? 19 : 30} className={OPEN + "mt-[1px] text-[22px] text-black"}>{i + 1}.</Fit>
            <div className={i < 9 ? "ml-[37px] mt-[-3px]" : "ml-[26px] mt-[-3px]"}><Mark k={k} w={32} h={30} /></div>
            <Fit w={w} className={OPEN + "ml-[34px] mt-[1px] text-[22px] text-black"}>{t}</Fit>
          </div>
        ))}
      </div>
    </div>
  );
}

const FB = GOTHIC + "text-[35px] text-white tracking-[1px] [-webkit-text-stroke:2px_white] ";
const FV = GOTHIC + "text-[38px] text-white [-webkit-text-stroke:0.8px_white] ";

function Footer() {
  return (
    <div className="flex h-[78px] items-center bg-[#33363b] pb-[5px] pl-[5px]">
      <Fit w={342} skew={-6} className={GOTHIC + "pt-[3px] text-[42px] text-white [-webkit-text-stroke:1.2px_white]"}>CINCINNATI BEARCATS</Fit>
      <Fit w={120} skew={-4} className={FB + "ml-[519px]"}>RECORD :</Fit>
      <Fit w={65} skew={-6} className={FV + "ml-[20px]"}>(1-0)</Fit>
      <Fit w={89} skew={-4} className={FB + "ml-[83px]"}>RANK :</Fit>
      <Fit w={53} skew={-6} className={FV + "ml-[25px]"}>#29</Fit>
      <Fit w={138} skew={-4} className={FB + "ml-[49px]"}>PRESTIGE :</Fit>
      <Fit w={33} skew={-6} className={FV + "ml-[21px]"}>78</Fit>
      <Fit w={298} skew={-4} className={FB + "ml-[51px]"}>RECRUIT CLASS RANK :</Fit>
      <Fit w={37} skew={-6} className={FV + "ml-[21px]"}>33</Fit>
    </div>
  );
}

export default function App() {
  return (
    <div className="h-[2046px] w-[3584px] overflow-hidden bg-white pl-[112px] pt-[75px]">
      <div className="h-[1822px] w-[3360px] rounded-[12px] shadow-[0_36px_80px_rgba(0,0,0,0.5),0_0_4px_rgba(0,0,0,0.5)]">
        <TitleBar />
        <div className="h-[1745px] overflow-hidden rounded-b-[8px] bg-[#2c2c2e] bg-[radial-gradient(circle_at_3318px_701px,#65645e_0,#585753_30px,transparent_44px),radial-gradient(ellipse_90px_50px_at_70px_200px,#464748,transparent),radial-gradient(ellipse_40px_60px_at_40px_515px,#454646,transparent),radial-gradient(ellipse_120px_160px_at_1080px_1640px,#50504c,transparent),radial-gradient(ellipse_900px_220px_at_1300px_1700px,#4a4a48,transparent),radial-gradient(ellipse_700px_300px_at_2300px_1745px,#40413f,transparent),radial-gradient(ellipse_500px_700px_at_0px_1200px,#3e3e3d,transparent),radial-gradient(ellipse_1100px_160px_at_1500px_120px,#38393b,transparent)] pl-[110px] pt-[170px]">
          <div className="flex h-[1402px] w-[3140px]">
            <Sidebar />
            <div className="flex w-[2800px] flex-col bg-[#ebebeb]">
              <Header />
              <Banner />
              <div className="flex h-[1120px]">
                <div className="w-[2200px]">
                  <NavBar />
                  <div className="w-max [filter:drop-shadow(5px_7px_4px_rgba(0,0,0,0.75))]">
                    <Panel />
                  </div>
                </div>
                <Rankings />
              </div>
              <Footer />
            </div>
          </div>
        </div>
      </div>
    </div>
  );
}
